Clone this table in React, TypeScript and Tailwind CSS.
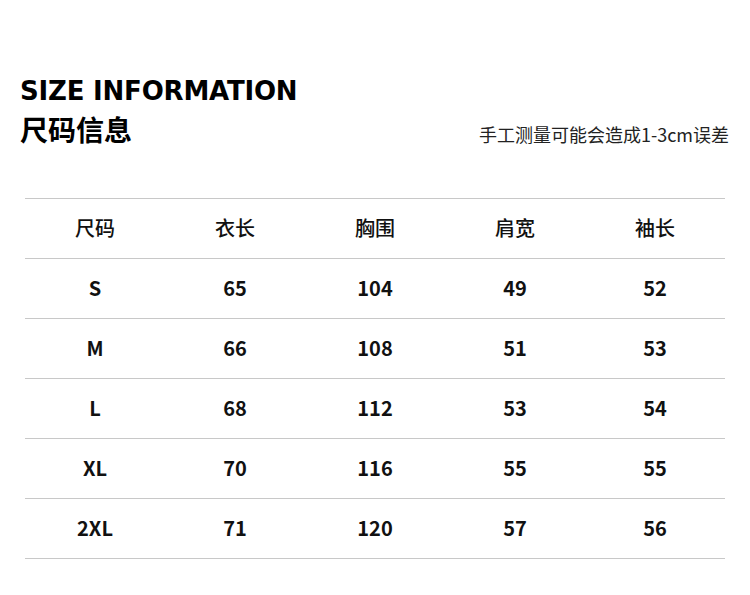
const headers = ["尺码", "衣长", "胸围", "肩宽", "袖长"];

const rows: string[][] = [
  ["S", "65", "104", "49", "52"],
  ["M", "66", "108", "51", "53"],
  ["L", "68", "112", "53", "54"],
  ["XL", "70", "116", "55", "55"],
  ["2XL", "71", "120", "57", "56"],
];

function Row({ cells, head }: { cells: string[]; head?: boolean }) {
  return (
    <div className="grid grid-cols-5 h-[60px] items-center pb-[2px] border-b border-[#c8c8c8]">
      {cells.map((c, i) => (
        <div
          key={i}
          className={`text-center text-[20px] text-[#111] ${head ? "font-medium" : "font-bold"}`}
        >
          {c}
        </div>
      ))}
    </div>
  );
}

export default function App() {
  return (
    <div
      className="w-[750px] h-[595px] bg-white overflow-hidden"
      style={{ fontFamily: '"Noto Sans CJK SC", "Noto Sans", sans-serif' }}
    >
      <div className="flex items-end justify-between pl-[20px] pr-[21px] pt-[73px]">
        <div>
          <div className="text-[26px] leading-[37px] font-bold tracking-[-0.2px] text-black font-['DejaVu_Sans',sans-serif]">
            SIZE INFORMATION
          </div>
          <div className="text-[28px] leading-[38px] font-bold text-black">尺码信息</div>
        </div>
        <div className="text-[18px] leading-[24px] text-[#222] mb-[2px]">手工测量可能会造成1-3cm误差</div>
      </div>

      {/* size table */}
      <div className="mx-[25px] mt-[50px] border-t border-[#c8c8c8]">
        <Row cells={headers} head />
        {rows.map((r, i) => (
          <Row key={i} cells={r} />
        ))}
      </div>
    </div>
  );
}
